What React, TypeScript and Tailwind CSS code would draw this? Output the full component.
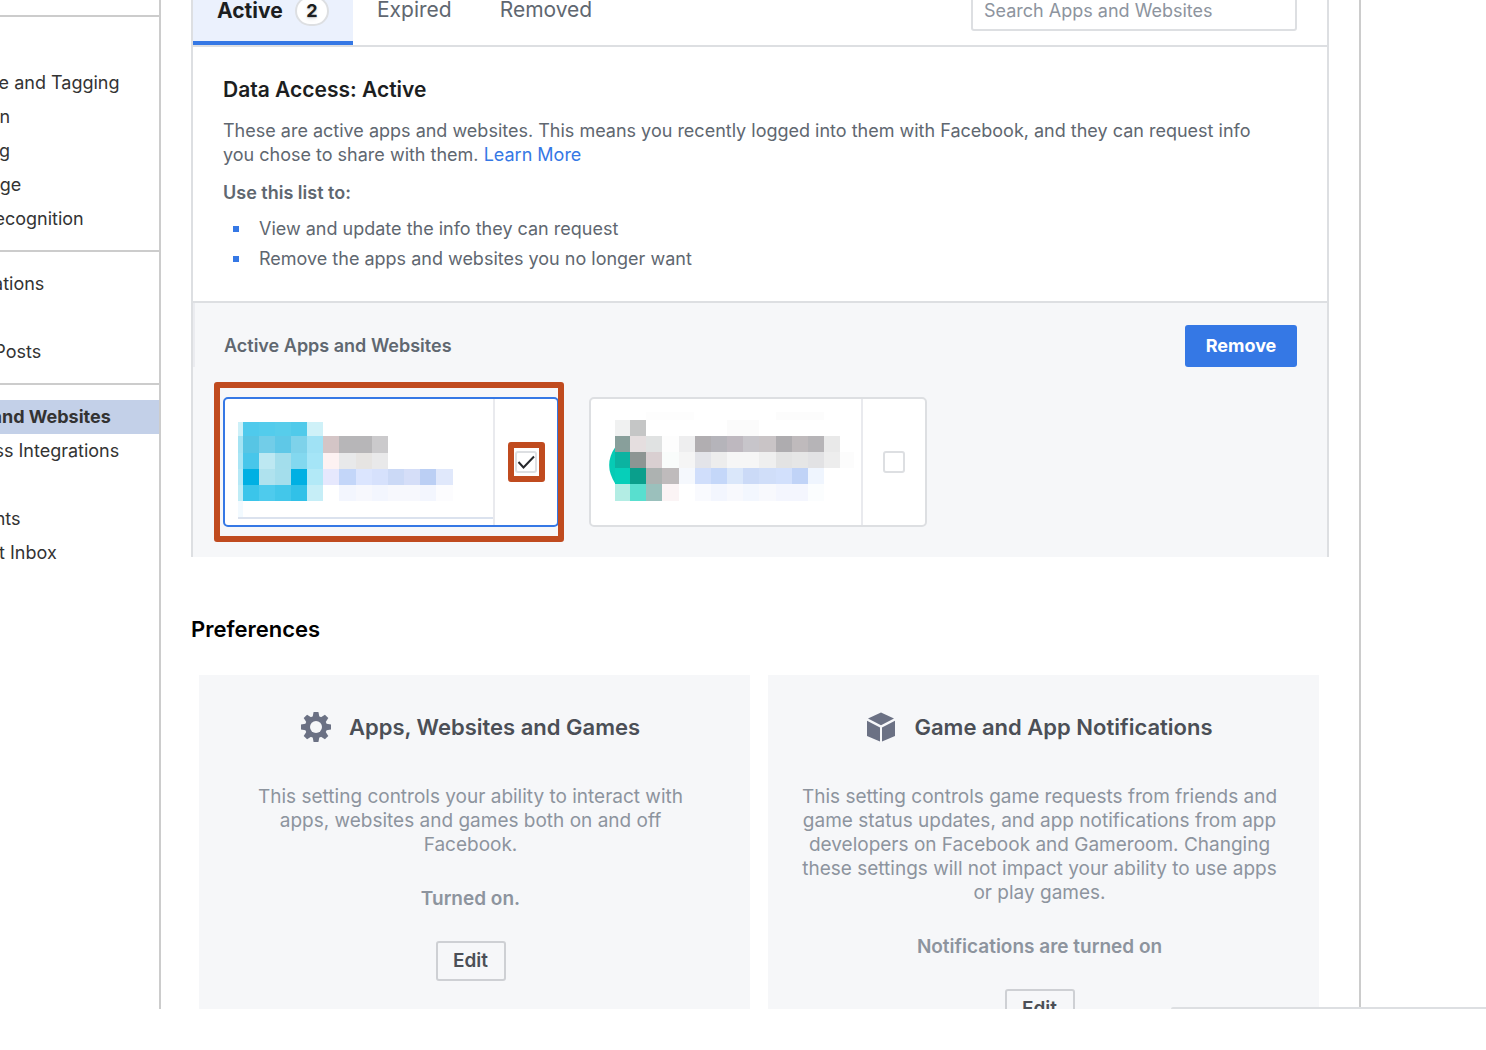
import React, { useState } from "react";

type Cell = [x: number, y: number, w: number, h: number, fill: string];

const firstAppCells: Cell[] = [
  [99, 141, 14, 42, "#cdf0f8"],
  [113, 141, 48, 42, "#4fcaec"],
  [161, 141, 48, 42, "#53ccec"],
  [209, 141, 48, 42, "#57cdeb"],
  [257, 141, 49, 42, "#50caea"],
  [306, 141, 48, 42, "#cff1f8"],
  [99, 183, 14, 50, "#a4e3f3"],
  [113, 183, 48, 50, "#57c5e4"],
  [161, 183, 48, 50, "#72cde8"],
  [209, 183, 48, 50, "#5fc8e7"],
  [257, 183, 49, 50, "#7ed2ea"],
  [306, 183, 48, 50, "#a0e2f5"],
  [354, 183, 48, 50, "#d4c5c6"],
  [402, 183, 98, 50, "#b7b6b8"],
  [500, 183, 48, 50, "#cbcacc"],
  [99, 233, 14, 48, "#a9e5f5"],
  [113, 233, 48, 48, "#48c6ea"],
  [161, 233, 48, 48, "#bde8f2"],
  [209, 233, 48, 48, "#a3deec"],
  [257, 233, 49, 48, "#83d8ef"],
  [306, 233, 48, 48, "#a5e5f7"],
  [354, 233, 48, 48, "#fdf2f2"],
  [402, 233, 50, 48, "#e8e9ea"],
  [452, 233, 48, 48, "#e6e4e2"],
  [500, 233, 48, 48, "#e9e9ea"],
  [99, 281, 14, 48, "#b5e8f6"],
  [113, 281, 48, 48, "#00b0e3"],
  [161, 281, 48, 48, "#afe2ee"],
  [209, 281, 48, 48, "#a4deec"],
  [257, 281, 49, 48, "#00b0e3"],
  [306, 281, 48, 48, "#b2e9f7"],
  [354, 281, 48, 48, "#e6e8fd"],
  [402, 281, 50, 48, "#c3d6f9"],
  [452, 281, 48, 48, "#dbe5fe"],
  [500, 281, 48, 48, "#d6e1fc"],
  [548, 281, 50, 48, "#cbd9f6"],
  [598, 281, 47, 48, "#d5def8"],
  [645, 281, 48, 48, "#bbcff4"],
  [693, 281, 50, 48, "#e0e8fb"],
  [99, 329, 14, 49, "#bfecf6"],
  [113, 329, 48, 49, "#3bc5ea"],
  [161, 329, 48, 49, "#4ecbed"],
  [209, 329, 48, 49, "#43c7ea"],
  [257, 329, 49, 49, "#31c1e8"],
  [306, 329, 48, 49, "#c6eef7"],
  [402, 329, 50, 49, "#f3f6fe"],
  [452, 329, 48, 49, "#f7f8fd"],
  [500, 329, 48, 49, "#f3f6fe"],
  [548, 329, 97, 49, "#f7f8fd"],
  [645, 329, 48, 49, "#f3f6fe"],
  [693, 329, 50, 49, "#fcfcfe"],
  [99, 378, 14, 48, "#f2faff"],
  [99, 426, 765, 6, "#dbe2ee"],
];

const secondAppCells: Cell[] = [
  [214, 80, 142, 24, "#fdfdfd"],
  [603, 80, 144, 24, "#fcfcfc"],
  [120, 105, 45, 48, "#f0f1f1"],
  [165, 105, 48, 48, "#c5c6c6"],
  [456, 105, 96, 48, "#fbfbfb"],
  [120, 153, 45, 49, "#889f9b"],
  [165, 153, 48, 49, "#e5dedf"],
  [213, 153, 48, 49, "#e0e2e2"],
  [261, 153, 50, 49, "#fdfdfd"],
  [311, 153, 48, 49, "#eeeeef"],
  [359, 153, 48, 49, "#b1aeb1"],
  [407, 153, 49, 49, "#b5b4ba"],
  [456, 153, 48, 49, "#beb8bf"],
  [504, 153, 48, 49, "#c7c5ca"],
  [552, 153, 50, 49, "#c9c4c6"],
  [602, 153, 48, 49, "#aeacaf"],
  [650, 153, 48, 49, "#bfbabc"],
  [698, 153, 49, 49, "#b6b4b7"],
  [747, 153, 48, 49, "#e9e9e9"],
  [120, 202, 45, 48, "#0bb3a1"],
  [165, 202, 48, 48, "#8d9593"],
  [213, 202, 48, 48, "#d9cfd1"],
  [261, 202, 50, 48, "#f9fcfb"],
  [311, 202, 48, 48, "#f5f5f5"],
  [359, 202, 48, 48, "#e3e4e9"],
  [407, 202, 49, 48, "#ededed"],
  [456, 202, 96, 48, "#f6f6f6"],
  [552, 202, 50, 48, "#efefef"],
  [602, 202, 48, 48, "#e3e3e3"],
  [650, 202, 48, 48, "#e6e6e6"],
  [698, 202, 49, 48, "#e2e2e4"],
  [747, 202, 48, 48, "#ededed"],
  [795, 202, 42, 48, "#fcfcfc"],
  [120, 250, 45, 48, "#06cfb9"],
  [165, 250, 48, 48, "#0a9f8c"],
  [213, 250, 48, 48, "#adb2b1"],
  [261, 250, 50, 48, "#bfbbbc"],
  [311, 250, 48, 48, "#f5f8fd"],
  [359, 250, 48, 48, "#d0defb"],
  [407, 250, 49, 48, "#c4d7f9"],
  [456, 250, 48, 48, "#dae7fa"],
  [504, 250, 48, 48, "#cbdaf7"],
  [552, 250, 50, 48, "#d0def9"],
  [602, 250, 48, 48, "#d2e0fc"],
  [650, 250, 48, 48, "#c0d3f7"],
  [698, 250, 49, 48, "#eff5fe"],
  [120, 298, 45, 50, "#b3ede4"],
  [165, 298, 48, 50, "#58dfcf"],
  [213, 298, 48, 50, "#9bc0bc"],
  [261, 298, 50, 50, "#fbf4f5"],
  [359, 298, 48, 50, "#f9fafe"],
  [407, 298, 49, 50, "#f3f6fe"],
  [456, 298, 48, 50, "#f8f9fd"],
  [504, 298, 48, 50, "#f3f7fe"],
  [552, 298, 50, 50, "#f8f9fd"],
  [602, 298, 96, 50, "#f4f6fe"],
  [698, 298, 49, 50, "#fbfdfe"],
];

function Mosaic({ cells }: { cells: Cell[] }) {
  return (
    <g shapeRendering="crispEdges">
      {cells.map(([x, y, w, h, fill]) => (
        <rect key={`${x}-${y}`} x={x} y={y} width={w} height={h} fill={fill} />
      ))}
    </g>
  );
}

function NavItem({ label, active = false }: { label: string; active?: boolean }) {
  return (
    <li className={active ? "bg-[#c3d0e8]" : ""}>
      <a
        href="#"
        className={
          active
            ? "-ml-[63px] flex h-[34px] items-center pl-1 font-bold whitespace-nowrap"
            : "-ml-[63px] flex h-[34px] items-center whitespace-nowrap"
        }
      >
        {label}
      </a>
    </li>
  );
}

function NavGroup({ children }: { children: React.ReactNode }) {
  return <ul className="border-t-2 border-[#ccc] pt-[15px] pb-[14px]">{children}</ul>;
}

function AppCheckbox({ label, initial }: { label: string; initial: boolean }) {
  const [checked, setChecked] = useState(initial);
  return (
    <span className="relative flex size-[22px]">
      <input
        type="checkbox"
        aria-label={label}
        checked={checked}
        onChange={(e) => setChecked(e.target.checked)}
        className="size-[22px] appearance-none rounded-[3px] border-2 border-[#dddfe2] bg-white"
      />
      {checked && (
        <svg
          viewBox="0 0 22 22"
          className="pointer-events-none absolute inset-0 size-[22px]"
          fill="none"
          stroke="#26282b"
          strokeWidth="2"
          aria-hidden="true"
        >
          <path d="M3.5 11 L8.5 16.5 L19 5.5" />
        </svg>
      )}
    </span>
  );
}

function GearIcon() {
  return (
    <svg viewBox="-15 -15 30 30" className="size-[30px]" fill="#6b7184" aria-hidden="true">
      {[0, 45, 90, 135].map((a) => (
        <path
          key={a}
          transform={`rotate(${a})`}
          d="M-2.4 -15 H2.4 L3.6 -9 V9 L2.4 15 H-2.4 L-3.6 9 V-9 Z"
        />
      ))}
      <circle r="11" />
      <circle r="6" fill="#f6f7f9" />
    </svg>
  );
}

function CubeIcon() {
  return (
    <svg viewBox="0 0 30 30" className="size-[30px]" fill="#6b7184" aria-hidden="true">
      <path d="M15 0.5 L28 6.4 L15 13.2 L2 6.4 Z" />
      <path d="M1 8.8 L14 15.4 V29.5 L1 24 Z" />
      <path d="M29 8.8 L16 15.4 V29.5 L29 24 Z" />
    </svg>
  );
}

function PreferenceCard({
  icon,
  title,
  status,
  children,
}: {
  icon: React.ReactNode;
  title: string;
  status: string;
  children: React.ReactNode;
}) {
  return (
    <article className="flex flex-1 flex-col items-center bg-[#f6f7f9] pt-9 pr-2 text-center text-[19px] text-[#8d949e]">
      <h3 className="flex items-center gap-[18px] text-[22px] leading-8 font-semibold text-[#4b4f56]">
        {icon}
        {title}
      </h3>
      <p className="mt-[42px]">{children}</p>
      <p className="mt-[30px] font-semibold">{status}</p>
      <button
        type="button"
        className="mt-[30px] h-10 w-[70px] rounded-[3px] border-2 border-[#ced0d4] font-semibold text-[#4b4f56]"
      >
        Edit
      </button>
    </article>
  );
}

export default function App() {
  return (
    <div className="h-screen bg-white pb-[41px] font-['Inter',sans-serif] text-[18px] leading-6">
      <div className="relative flex h-full overflow-hidden">
        <nav className="w-[161px] shrink-0 overflow-hidden border-r-2 border-[#ccc] pt-[15px] text-[#333]">
          <NavGroup>
            <li className="h-[34px]" />
            <NavItem label="Timeline and Tagging" />
            <NavItem label="Location" />
            <NavItem label="Blocking" />
            <NavItem label="Language" />
            <NavItem label="Face Recognition" />
          </NavGroup>
          <NavGroup>
            <NavItem label="Notifications" />
            <li className="h-[34px]" />
            <NavItem label="Public Posts" />
          </NavGroup>
          <NavGroup>
            <NavItem label="Apps and Websites" active />
            <NavItem label="Business Integrations" />
            <li className="h-[34px]" />
            <NavItem label="Payments" />
            <NavItem label="Support Inbox" />
          </NavGroup>
        </nav>

        <main className="min-w-0 flex-1 border-r-2 border-[#ccc] px-[30px]">
          <section className="-mt-5 border-x-2 border-[#dddfe2]">
            <header className="flex h-[67px] items-stretch justify-between border-b-2 border-[#dddfe2] pr-[30px] text-[21px] text-[#606770]">
              <div className="flex">
                <button
                  type="button"
                  className="flex w-40 items-center justify-between border-b-4 border-[#3578e5] bg-[#ebf1fd] px-6 font-bold text-[#1c1e21]"
                >
                  Active
                  <span className="flex h-[30px] w-[34px] items-center justify-center rounded-full border-2 border-[#dddfe2] bg-white text-[18px] text-shadow-md">
                    2
                  </span>
                </button>
                <button type="button" className="border-b-4 border-transparent px-6 pb-0.5">
                  Expired
                </button>
                <button type="button" className="border-b-4 border-transparent px-6 pb-0.5">
                  Removed
                </button>
              </div>
              <input
                type="search"
                aria-label="Search Apps and Websites"
                placeholder="Search Apps and Websites"
                className="mb-1 h-10 w-[326px] self-center rounded-[3px] border-2 border-[#dddfe2] px-[11px] text-[18px] placeholder:text-[#8d949e]"
              />
            </header>

            <div className="px-[30px] pt-[31px] pb-[30px] text-[#606770]">
              <h2 className="text-[21px] font-semibold text-[#1c1e21]">Data Access: Active</h2>
              <p className="mt-[17px]">
                These are active apps and websites. This means you recently logged into them with
                Facebook, and they can request info
                <br />
                you chose to share with them.{" "}
                <a href="#" className="text-[#3578e5]">
                  Learn More
                </a>
              </p>
              <p className="mt-[14px] font-semibold">Use this list to:</p>
              <ul className="mt-3 flex flex-col gap-1.5 pl-2.5">
                <li className="flex items-center gap-5">
                  <span className="size-1.5 bg-[#3578e5]" />
                  View and update the info they can request
                </li>
                <li className="flex items-center gap-5">
                  <span className="size-1.5 bg-[#3578e5]" />
                  Remove the apps and websites you no longer want
                </li>
              </ul>
            </div>

            <div className="border-t-2 border-[#dddfe2] bg-[#f6f7f9] pb-[30px]">
              <div className="flex items-center justify-between border-l-2 border-[#ebecf0] pt-[22px] pr-[30px] pl-[29px]">
                <h3 className="font-semibold text-[#606770]">Active Apps and Websites</h3>
                <button
                  type="button"
                  className="h-[42px] w-28 rounded-[3px] bg-[#3578e5] font-bold text-white"
                >
                  Remove
                </button>
              </div>
              <div className="mt-[30px] flex gap-[30px] pl-[30px]">
                <div className="relative flex rounded-[5px] border-2 border-[#3578e5] bg-white">
                  <svg viewBox="60 72 804 378" className="h-[126px] w-[268px]" aria-hidden="true">
                    <Mosaic cells={firstAppCells} />
                  </svg>
                  <div className="flex w-16 items-center justify-center border-l-2 border-[#e9eaee]">
                    <AppCheckbox label="First app" initial />
                  </div>
                  <div className="pointer-events-none absolute -top-[17px] -right-[7px] -bottom-[17px] -left-[11px] rounded-[3px] border-[6px] border-[#c04b1f]" />
                  <div className="pointer-events-none absolute top-[43px] right-3 h-10 w-[37px] rounded-[3px] border-[6px] border-[#c04b1f]" />
                </div>
                <div className="flex rounded-[5px] border-2 border-[#dddfe2] bg-white">
                  <svg viewBox="48 42 810 378" className="h-[126px] w-[270px]" aria-hidden="true">
                    <path d="M121 186 Q84 240 121 296 Z" fill="#06cbb5" />
                    <Mosaic cells={secondAppCells} />
                  </svg>
                  <div className="flex w-16 items-center justify-center border-l-2 border-[#e9eaee]">
                    <AppCheckbox label="Second app" initial={false} />
                  </div>
                </div>
              </div>
            </div>
          </section>

          <section>
            <h2 className="mt-[57px] text-[22px] leading-[30px] font-semibold text-black">
              Preferences
            </h2>
            <div className="mt-[31px] flex gap-[18px] pr-2.5 pl-2">
              <PreferenceCard
                icon={<GearIcon />}
                title="Apps, Websites and Games"
                status="Turned on."
              >
                This setting controls your ability to interact with
                <br />
                apps, websites and games both on and off
                <br />
                Facebook.
              </PreferenceCard>
              <PreferenceCard
                icon={<CubeIcon />}
                title="Game and App Notifications"
                status="Notifications are turned on"
              >
                This setting controls game requests from friends and
                <br />
                game status updates, and app notifications from app
                <br />
                developers on Facebook and Gameroom. Changing
                <br />
                these settings will not impact your ability to use apps
                <br />
                or play games.
              </PreferenceCard>
            </div>
          </section>
        </main>

        <div className="w-[125px] shrink-0" />
        <div className="absolute right-0 bottom-0 h-0.5 w-[315px] rounded-tl bg-[#dddfe2]" />
      </div>
    </div>
  );
}
